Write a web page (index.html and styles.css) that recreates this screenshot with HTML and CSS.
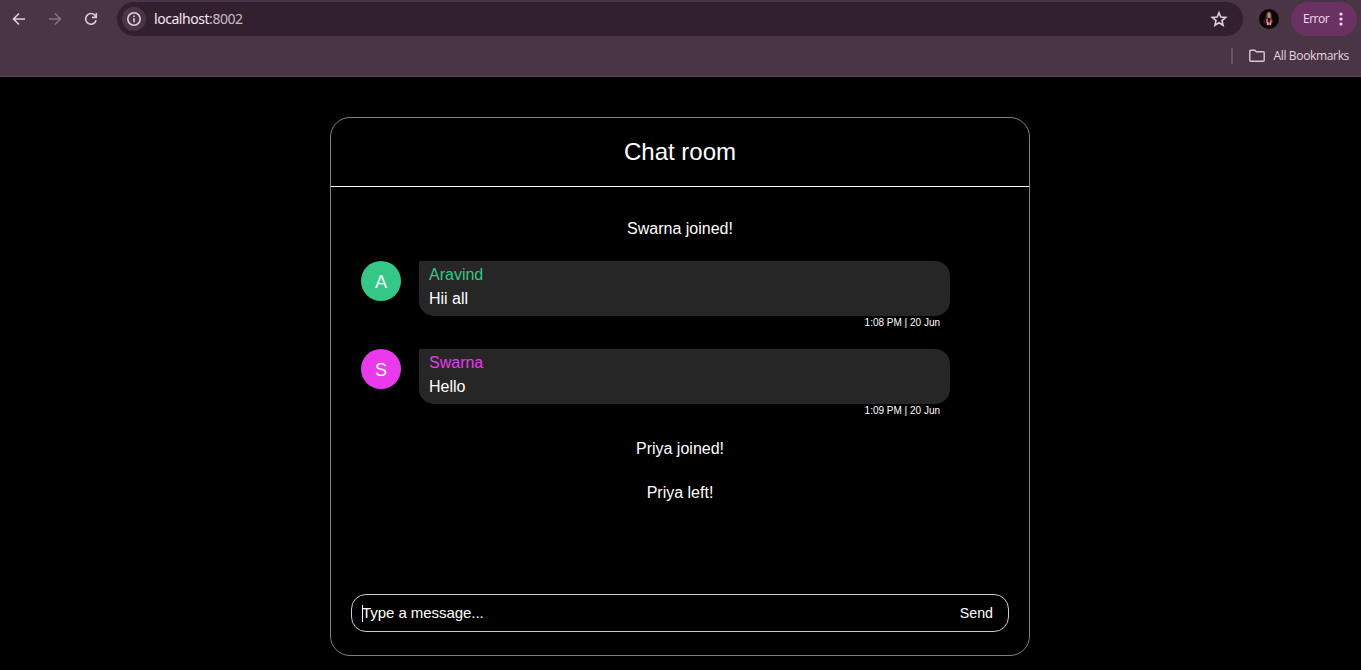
FILE: index.html
```html
<!DOCTYPE html>
<html lang="en">
<head>
<meta charset="utf-8">
<title>Chat room</title>
<link rel="stylesheet" href="styles.css">
</head>
<body>
<header class="browser">
  <div class="toolbar">
    <nav class="nav">
      <svg class="icon" viewBox="0 0 16 16"><path d="M14 8H3M8 2.5 2.5 8 8 13.5"/></svg>
      <svg class="icon icon-off" viewBox="0 0 16 16"><path d="M2 8h11M8 2.5 13.5 8 8 13.5"/></svg>
      <svg class="icon" viewBox="0 0 16 16"><path d="M13.1 9.2A5.3 5.3 0 1 1 11.9 4.3L13.2 5.7"/><path d="M13.3 2v4.4H9"/></svg>
    </nav>
    <div class="address">
      <span class="site-info">
        <svg class="icon" viewBox="0 0 16 16"><circle cx="8" cy="8" r="6.2"/><path d="M8 7.2v4M8 4.5v1.6"/></svg>
      </span>
      <span class="url">localhost<span class="port">:8002</span></span>
      <svg class="icon star" viewBox="0 0 18 18"><path d="M9 2.7 10.8 7l4.9.4-3.7 3.2 1.1 4.7L9 12.8l-4.1 2.5L6 10.6 2.3 7.4 7.2 7z"/></svg>
    </div>
    <svg class="profile" viewBox="0 0 20 20">
      <circle cx="10" cy="10" r="10" fill="#0c0606"/>
      <path d="M4 13 7 6l3-3 3 4 1 6-2 4H8z" fill="#301b16"/>
      <ellipse cx="10" cy="7" rx="2.6" ry="4.2" fill="#76554a"/>
      <path d="M9 4h2v5H9z" fill="#b8907d"/>
      <path d="M7 10h2l1 3 2-3 1.5 2-2 4H9l-2-3z" fill="#c4566c"/>
      <path d="M9 9h2l-.5 5h-1z" fill="#1c1011"/>
      <path d="M8 13h1.5v3H8zM11 13h1v3h-1z" fill="#eba8ac"/>
    </svg>
    <div class="error">
      <span>Error</span>
      <svg class="dots" viewBox="0 0 4 14"><circle cx="2" cy="2" r="1.6"/><circle cx="2" cy="7" r="1.6"/><circle cx="2" cy="12" r="1.6"/></svg>
    </div>
  </div>
  <div class="bookmarks">
    <span class="divider"></span>
    <svg class="folder" viewBox="0 0 16 14"><path d="M.8 2.2q0-1 1-1h4l1.6 1.6h6.8q1 0 1 1v7.4q0 1-1 1H1.8q-1 0-1-1z"/></svg>
    <span>All Bookmarks</span>
  </div>
</header>
<main class="page">
  <section class="chat">
    <h1 class="title">Chat room</h1>
    <div class="messages">
      <p class="notice">Swarna joined!</p>
      <article class="message aravind">
        <span class="avatar">A</span>
        <div class="content">
          <div class="bubble"><div class="name">Aravind</div><div>Hii all</div></div>
          <time class="time">1:08 PM | 20 Jun</time>
        </div>
      </article>
      <article class="message swarna">
        <span class="avatar">S</span>
        <div class="content">
          <div class="bubble"><div class="name">Swarna</div><div>Hello</div></div>
          <time class="time">1:09 PM | 20 Jun</time>
        </div>
      </article>
      <p class="notice">Priya joined!</p>
      <p class="notice">Priya left!</p>
    </div>
    <div class="composer">
      <span class="caret"></span>
      <span class="placeholder">Type a message...</span>
      <span class="send">Send</span>
    </div>
  </section>
</main>
</body>
</html>
```
FILE: styles.css
```css
* { box-sizing: border-box; }
body {
  margin: 0;
  height: 670px;
  overflow: hidden;
  background: #000;
  color: #fff;
  font: 16px/24px "Liberation Sans", Arial, sans-serif;
}
svg { display: block; flex: none; }

.browser {
  height: 77px;
  padding-top: 2px;
  background: #4a3544;
  border-bottom: 1px solid #5b4a56;
  color: #e6d6e0;
  font-family: "Open Sans", "Noto Sans", sans-serif;
}
.toolbar { display: flex; align-items: center; height: 34px; padding-right: 4px; }
.nav { display: flex; gap: 20px; width: 117px; padding-left: 11px; }
.icon {
  width: 16px;
  height: 16px;
  fill: none;
  stroke: #e2cddb;
  stroke-width: 1.6;
}
.icon-off { stroke: #85717f; }
.address {
  display: flex;
  align-items: center;
  width: 1126px;
  height: 34px;
  padding: 0 15px 0 5px;
  border-radius: 17px;
  background: #33202e;
}
.site-info {
  display: grid;
  place-items: center;
  width: 24px;
  height: 24px;
  border-radius: 50%;
  background: #4a3544;
}
.url { margin-left: 8px; font: 14px/20px "Noto Sans", sans-serif; letter-spacing: -.45px; color: #f3e5ee; }
.port { color: #cbb9c5; }
.star { width: 18px; height: 18px; margin-left: auto; }
.profile { width: 20px; height: 20px; margin-left: 16px; }
.error {
  display: flex;
  align-items: center;
  justify-content: space-between;
  width: 66px;
  height: 34px;
  margin-left: auto;
  padding: 0 14px 0 12px;
  border-radius: 17px;
  background: #693263;
  color: #fbdcf5;
  font-size: 12px;
  letter-spacing: -.5px;
}
.dots { width: 4px; height: 14px; fill: #fbdcf5; }
.bookmarks {
  display: flex;
  align-items: center;
  justify-content: flex-end;
  height: 40px;
  padding-right: 12px;
  font-size: 12px;
  letter-spacing: -.34px;
}
.divider { width: 2px; height: 16px; margin-right: 16px; background: #685363; }
.folder { width: 16px; height: 14px; margin-right: 8px; fill: none; stroke: #d9c7d3; stroke-width: 1.4; }

.page { padding-top: 40px; }
.chat {
  display: flex;
  flex-direction: column;
  width: 700px;
  height: 539px;
  margin-left: 330px;
  border: 1px solid #808080;
  border-radius: 20px;
}
.title {
  height: 69px;
  margin: 0;
  border-bottom: 1px solid #fff;
  font-size: 24px;
  font-weight: 400;
  line-height: 67px;
  text-align: center;
}
.messages { flex: 1; padding: 30px; }
.notice { height: 44px; margin: 0; text-align: center; }
.message { display: flex; gap: 18px; height: 88px; }
.aravind { --accent: #34c785; }
.swarna { --accent: #e93aec; }
.avatar {
  width: 40px;
  height: 40px;
  border-radius: 50%;
  background: var(--accent);
  font-size: 18px;
  line-height: 42px;
  text-align: center;
}
.content { width: 531px; }
.bubble {
  height: 55px;
  padding: 2px 10px;
  border-radius: 0 15px 15px;
  background: #262626;
}
.name { color: var(--accent); }
.time { display: block; padding-right: 10px; font-size: 10px; line-height: 14px; text-align: right; }
.composer {
  display: flex;
  align-items: center;
  height: 38px;
  margin: 0 20px 23px;
  padding: 0 15px 0 10px;
  border: 1px solid #ccc;
  border-radius: 15px;
  font-size: 15px;
}
.caret { width: 1px; height: 17px; margin-right: -1px; background: #fff; }
.placeholder { letter-spacing: -.05px; }
.send { margin-left: auto; font-size: 14.2px; }
```
